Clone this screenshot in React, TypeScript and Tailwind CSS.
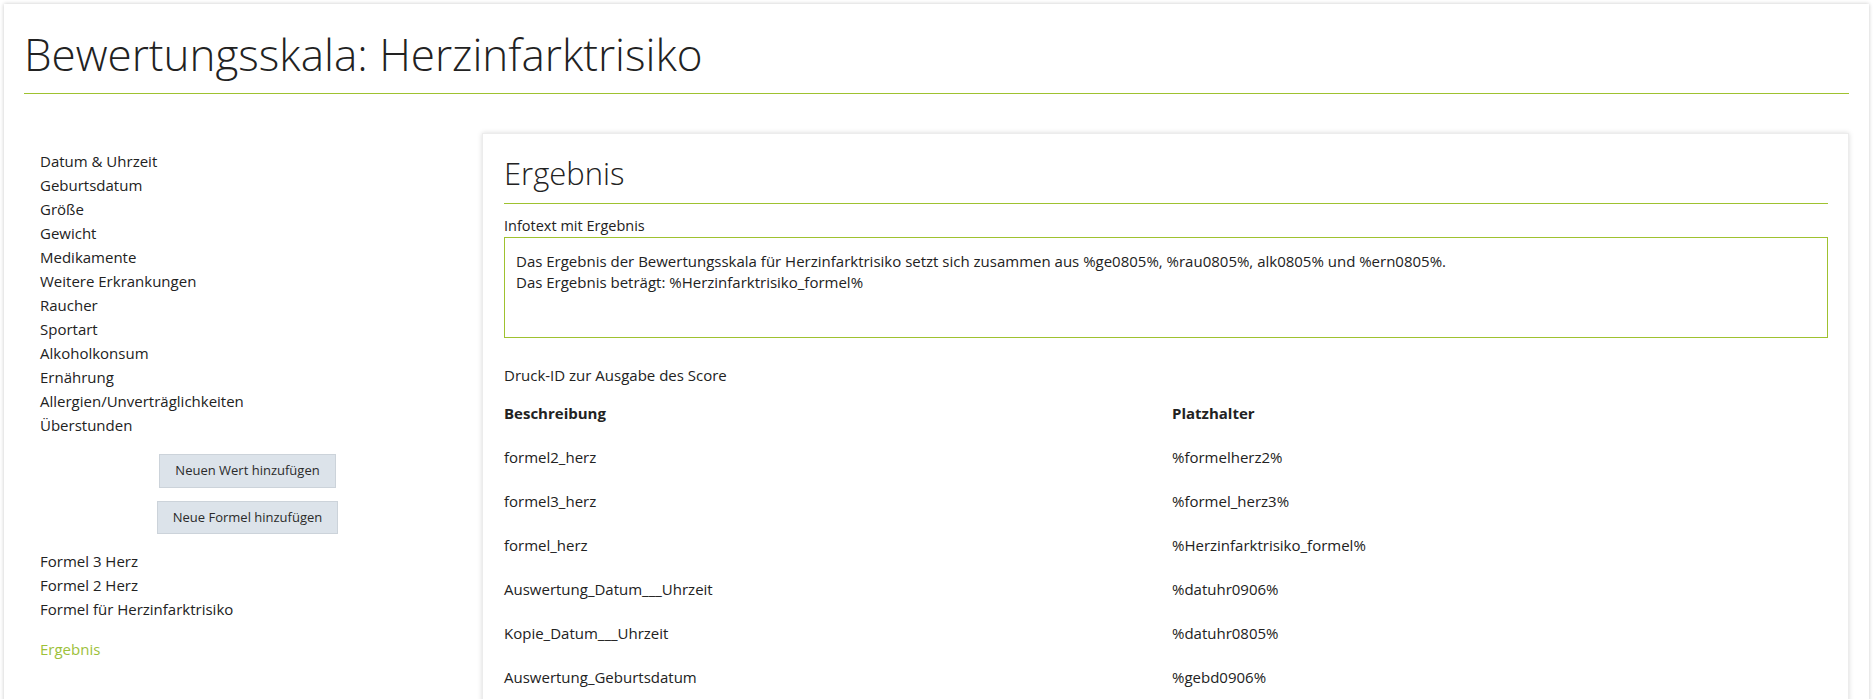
import React from 'react';

const fields = [
  'Datum & Uhrzeit',
  'Geburtsdatum',
  'Größe',
  'Gewicht',
  'Medikamente',
  'Weitere Erkrankungen',
  'Raucher',
  'Sportart',
  'Alkoholkonsum',
  'Ernährung',
  'Allergien/Unverträglichkeiten',
  'Überstunden',
];

const formulas = ['Formel 3 Herz', 'Formel 2 Herz', 'Formel für Herzinfarktrisiko'];

const placeholders = [
  ['formel2_herz', '%formelherz2%'],
  ['formel3_herz', '%formel_herz3%'],
  ['formel_herz', '%Herzinfarktrisiko_formel%'],
  ['Auswertung_Datum___Uhrzeit', '%datuhr0906%'],
  ['Kopie_Datum___Uhrzeit', '%datuhr0805%'],
  ['Auswertung_Geburtsdatum', '%gebd0906%'],
];

export default function App() {
  return (
    <div className="min-h-screen bg-white pt-1 pl-1 pr-[7px] font-['Segoe_UI','Open_Sans',sans-serif] text-[#222]">
      <div className="bg-white px-5 pt-[22px] pb-10 shadow-[0_0_4px_rgba(0,0,0,0.22)]">
        {/* Header */}
        <h1 className="text-[44px] font-light leading-[56px] text-[#222] mb-[11px]">
          Bewertungsskala: Herzinfarktrisiko
        </h1>
        <div className="h-px bg-[#9fc22f]" />

        <div className="flex mt-[39px]">
          {/* Sidebar */}
          <aside className="w-[447px] shrink-0 px-4 pt-[16px] mr-[11px]">
            <ul className="text-[15px] leading-6">
              {fields.map((f) => (
                <li key={f} className="cursor-pointer">{f}</li>
              ))}
            </ul>
            <div className="flex flex-col items-center gap-[13px] mt-[17px]">
              <button className="h-[34px] px-[15px] bg-[#dce3ea] border border-[#ccd3da] text-[13px] text-[#2b2b2b]">
                Neuen Wert hinzufügen
              </button>
              <button className="h-[33px] px-[15px] bg-[#dce3ea] border border-[#ccd3da] text-[13px] text-[#2b2b2b]">
                Neue Formel hinzufügen
              </button>
            </div>
            <ul className="text-[15px] leading-6 mt-[15px]">
              {formulas.map((f) => (
                <li key={f} className="cursor-pointer">{f}</li>
              ))}
            </ul>
            <div className="text-[15px] leading-6 mt-4 text-[#9dc13a] cursor-pointer">Ergebnis</div>
          </aside>

          {/* Result card */}
          <section className="flex-1 bg-white border border-[#ececec] shadow-[0_0_5px_rgba(0,0,0,0.15)] pl-[21px] pr-[20px] pt-[21px] pb-16">
            <h2 className="text-[31px] font-light leading-9">Ergebnis</h2>
            <div className="h-px bg-[#9fc22f] mt-[12px]" />

            <div className="text-[14.5px] leading-5 mt-[12px] mb-px">Infotext mit Ergebnis</div>
            <div className="h-[101px] border border-[#9fc22f] px-[11px] pt-[13px] text-[15px] leading-[21px]">
              <div>
                Das Ergebnis der Bewertungsskala für Herzinfarktrisiko setzt sich zusammen aus %ge0805%, %rau0805%, alk0805% und %ern0805%.
              </div>
              <div>Das Ergebnis beträgt: %Herzinfarktrisiko_formel%</div>
            </div>

            <div className="text-[15px] leading-5 mt-[27px]">Druck-ID zur Ausgabe des Score</div>

            <div className="grid grid-cols-2 gap-x-3 mt-[6px] text-[15px]">
              <div className="h-11 flex items-center font-bold">Beschreibung</div>
              <div className="h-11 flex items-center font-bold">Platzhalter</div>
              {placeholders.map(([label, key]) => (
                <React.Fragment key={label}>
                  <div className="h-11 flex items-center">{label}</div>
                  <div className="h-11 flex items-center">{key}</div>
                </React.Fragment>
              ))}
            </div>
          </section>
        </div>
      </div>
    </div>
  );
}
